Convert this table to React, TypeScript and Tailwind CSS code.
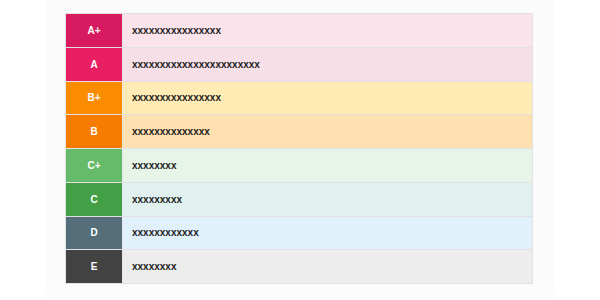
const GRADES = [
  { label: 'A+', n: 16, cell: 'bg-[#d81b60]', row: 'bg-[#fbe3eb]' },
  { label: 'A', n: 23, cell: 'bg-[#e91e63]', row: 'bg-[#f6dfe7]' },
  { label: 'B+', n: 16, cell: 'bg-[#fb8c00]', row: 'bg-[#ffebb3]' },
  { label: 'B', n: 14, cell: 'bg-[#f57c00]', row: 'bg-[#ffe0b0]' },
  { label: 'C+', n: 8, cell: 'bg-[#66bb6a]', row: 'bg-[#e7f4e8]' },
  { label: 'C', n: 9, cell: 'bg-[#43a047]', row: 'bg-[#e0f1f0]' },
  { label: 'D', n: 12, cell: 'bg-[#546e7a]', row: 'bg-[#e1f1fc]' },
  { label: 'E', n: 8, cell: 'bg-[#424242]', row: 'bg-[#ededed]' },
]

export default function App() {
  return (
    <div className="flex h-[300px] w-[600px] justify-center bg-white font-['Liberation_Sans',Arial,sans-serif]">
      <div className="flex w-[510px] flex-col bg-gradient-to-b from-[#fbfbfb] from-[94%] to-[#fdfdfd] px-5 pt-[13px]">
        <div className="flex h-[271px] w-[468px] flex-col border border-[#e2e2e2]">
          {GRADES.map((g, i) => (
            <div
              key={g.label}
              className={`flex flex-1 ${g.row} ${i < GRADES.length - 1 ? 'border-b border-[#e4dfe2]' : ''}`}
            >
              <div
                className={`flex w-[57px] shrink-0 items-center justify-center border-r border-[#e6e6e6] text-[10px] font-bold text-white ${g.cell}`}
              >
                {g.label}
              </div>
              <div className="flex items-center pl-[9px] text-[10px] font-bold text-[#222]">
                {'x'.repeat(g.n)}
              </div>
            </div>
          ))}
        </div>
      </div>
    </div>
  )
}
